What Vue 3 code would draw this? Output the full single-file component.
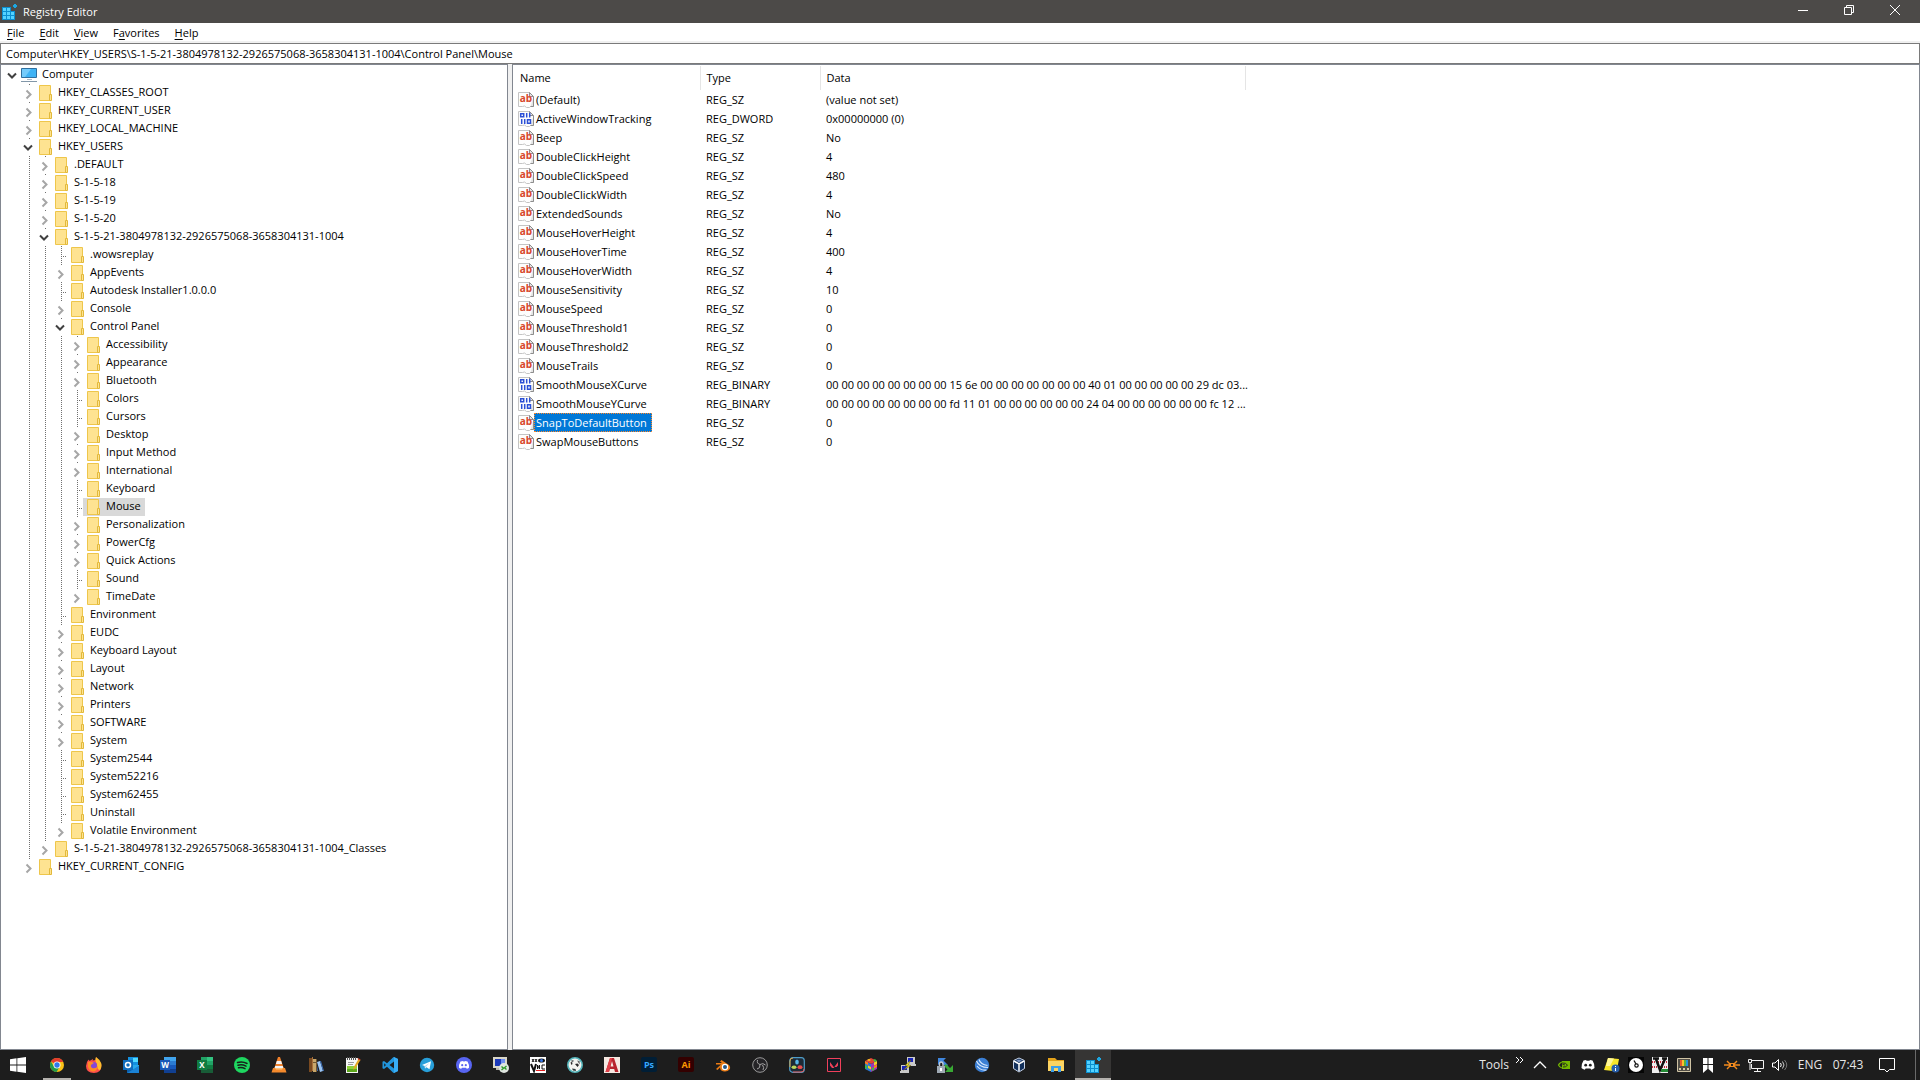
<script setup>
import { ref } from 'vue'

const menus = ['File', 'Edit', 'View', 'Favorites', 'Help'].map((label) => {
  const at = label === 'Favorites' ? 1 : 0
  return { label, before: label.slice(0, at), key: label[at], after: label.slice(at + 1) }
})

const address = ref('Computer\\HKEY_USERS\\S-1-5-21-3804978132-2926575068-3658304131-1004\\Control Panel\\Mouse')

// state: '+' collapsed, '-' expanded, '' leaf
const tree = [
  [0, '-', 'Computer'],
  [1, '+', 'HKEY_CLASSES_ROOT'],
  [1, '+', 'HKEY_CURRENT_USER'],
  [1, '+', 'HKEY_LOCAL_MACHINE'],
  [1, '-', 'HKEY_USERS'],
  [2, '+', '.DEFAULT'],
  [2, '+', 'S-1-5-18'],
  [2, '+', 'S-1-5-19'],
  [2, '+', 'S-1-5-20'],
  [2, '-', 'S-1-5-21-3804978132-2926575068-3658304131-1004'],
  [3, '', '.wowsreplay'],
  [3, '+', 'AppEvents'],
  [3, '', 'Autodesk Installer1.0.0.0'],
  [3, '+', 'Console'],
  [3, '-', 'Control Panel'],
  [4, '+', 'Accessibility'],
  [4, '+', 'Appearance'],
  [4, '+', 'Bluetooth'],
  [4, '', 'Colors'],
  [4, '', 'Cursors'],
  [4, '+', 'Desktop'],
  [4, '+', 'Input Method'],
  [4, '+', 'International'],
  [4, '', 'Keyboard'],
  [4, '', 'Mouse'],
  [4, '+', 'Personalization'],
  [4, '+', 'PowerCfg'],
  [4, '+', 'Quick Actions'],
  [4, '', 'Sound'],
  [4, '+', 'TimeDate'],
  [3, '', 'Environment'],
  [3, '+', 'EUDC'],
  [3, '+', 'Keyboard Layout'],
  [3, '+', 'Layout'],
  [3, '+', 'Network'],
  [3, '+', 'Printers'],
  [3, '+', 'SOFTWARE'],
  [3, '+', 'System'],
  [3, '', 'System2544'],
  [3, '', 'System52216'],
  [3, '', 'System62455'],
  [3, '', 'Uninstall'],
  [3, '+', 'Volatile Environment'],
  [2, '+', 'S-1-5-21-3804978132-2926575068-3658304131-1004_Classes'],
  [1, '+', 'HKEY_CURRENT_CONFIG'],
].map(([level, state, label]) => ({ level, state, label }))

const selectedKey = ref('Mouse')

const values = [
  ['(Default)', 'REG_SZ', '(value not set)'],
  ['ActiveWindowTracking', 'REG_DWORD', '0x00000000 (0)'],
  ['Beep', 'REG_SZ', 'No'],
  ['DoubleClickHeight', 'REG_SZ', '4'],
  ['DoubleClickSpeed', 'REG_SZ', '480'],
  ['DoubleClickWidth', 'REG_SZ', '4'],
  ['ExtendedSounds', 'REG_SZ', 'No'],
  ['MouseHoverHeight', 'REG_SZ', '4'],
  ['MouseHoverTime', 'REG_SZ', '400'],
  ['MouseHoverWidth', 'REG_SZ', '4'],
  ['MouseSensitivity', 'REG_SZ', '10'],
  ['MouseSpeed', 'REG_SZ', '0'],
  ['MouseThreshold1', 'REG_SZ', '0'],
  ['MouseThreshold2', 'REG_SZ', '0'],
  ['MouseTrails', 'REG_SZ', '0'],
  ['SmoothMouseXCurve', 'REG_BINARY', '00 00 00 00 00 00 00 00 15 6e 00 00 00 00 00 00 00 40 01 00 00 00 00 00 29 dc 03...'],
  ['SmoothMouseYCurve', 'REG_BINARY', '00 00 00 00 00 00 00 00 fd 11 01 00 00 00 00 00 00 24 04 00 00 00 00 00 00 fc 12 ...'],
  ['SnapToDefaultButton', 'REG_SZ', '0'],
  ['SwapMouseButtons', 'REG_SZ', '0'],
].map(([name, type, data]) => ({ name, type, data }))

const selectedValue = ref('SnapToDefaultButton')

const regedit = `<path fill="#0b8fd0" d="M1 3h9v4h4v9H1z"/><path fill="#54d2ff" d="M2 4h3v3H2zM6 4h3v3H6zM2 8h3v3H2zM6 8h3v3H6zM10 8h3v3h-3zM2 12h3v3H2zM6 12h3v3H6zM10 12h3v3h-3z"/><path fill="#1da6e0" d="M12 1h1V0h2v1h1v2h-1v1h-2V3h-1z"/>`

const apps = [
  { name: 'Google Chrome', open: true, svg: `<circle cx="8" cy="8" r="7" fill="#fbc116"/><path fill="#e33b2e" d="M8 8 1.9 4.5A7 7 0 0 1 14.2 5H8z"/><path fill="#229a4a" d="M1.9 4.5A7 7 0 0 0 7.6 15L10.8 9.5 8 8 4.9 9.5z"/><circle cx="8" cy="8" r="3.5" fill="#fff"/><circle cx="8" cy="8" r="2.7" fill="#2f78ea"/>` },
  { name: 'Firefox', svg: `<path fill="#ff4f4b" d="M1 5 2.5 2.5l.7 1.3L5 3.2 7 1.8l-.4 1.8L9.5 3 10 0l2.5 3L15 6.500q1.600 9.500-7 9.500Q0 16 0 9z"/><path fill="#ffbd2e" d="M10 0q4 2.500 5.300 6.500.8 4-1.300 6.500-3 0-3-6Q8.500 4 10 0z"/><circle cx="7.500" cy="8.500" r="3.500" fill="#8548d9"/><path fill="#ff8b24" d="M2 5q3-1 6 1L5.500 7.500Q4 9 6 11q4 1 6-2-1 6-6 5.500Q1 13 2 5z"/>` },
  { name: 'Outlook', svg: `<path fill="#1490df" d="M5 0h10v8H5z"/><path fill="#50d9ff" d="M10 1h5v4h-5z"/><path fill="#28a8ea" d="M4 8h12v8H4z"/><path fill="#0a5fac" d="m4 9 6 4 6-4v7H4z"/><path fill="#1a82d5" d="m4 16 12-7v7z"/><rect y="3" width="10" height="10" fill="#0f6cbd"/><circle cx="5" cy="8" r="2.500" fill="none" stroke="#fff" stroke-width="1.500"/>` },
  { name: 'Word', svg: `<path fill="#41a5ee" d="M4 0h12v4H4z"/><path fill="#2b7cd3" d="M4 4h12v4H4z"/><path fill="#185abd" d="M4 8h12v4H4z"/><path fill="#103f91" d="M4 12h12v4H4z"/><path fill="#1957b7" d="M0 3h10v10H0z"/><text x="5" y="11" class="glyph" font-size="8" fill="#fff">W</text>` },
  { name: 'Excel', svg: `<path fill="#21a366" d="M4 0h6v8H4z"/><path fill="#33c481" d="M10 0h6v4h-6z"/><path fill="#21a366" d="M10 4h6v4h-6z"/><path fill="#107c41" d="M10 8h6v4h-6z"/><path fill="#185c37" d="M4 8h6v4h6v4H4z"/><path fill="#107c41" d="M0 3h10v10H0z"/><text x="5" y="11" class="glyph" font-size="8" fill="#fff">X</text>` },
  { name: 'Spotify', svg: `<circle cx="8" cy="8" r="8" fill="#1ed760"/><path fill="none" stroke="#17201a" stroke-linecap="round" stroke-width="1.500" d="M3.500 5.500q5-1.500 9.500 1M4 8.200q4-1.200 8 .9M4.500 10.800q3.500-.9 6.500.8"/>` },
  { name: 'VLC', svg: `<path fill="#f0802a" d="M8 0h1l4 12H3L7 0z"/><path fill="#f3f3f3" d="M5.800 4h4.400l.9 3H4.900zM4.200 9h7.600l.7 2.500h-9z"/><path fill="#f58a2c" d="M2 11h12l1.500 4.500H.5z"/><path fill="#ffc27a" d="M4 11h8l-1 1.500H5z"/>` },
  { name: 'Calibre', svg: `<path fill="#7a4a20" d="M1 1h3v14H1z"/><path fill="#a8703a" d="M4 0h1v14H4z"/><path fill="#c9a86b" d="M5 2h3v13H5z"/><path fill="#6f5632" d="M8 2h1v13H8zM5 5h3v1H5z"/><path fill="#9cc5f2" d="m9 5 3-1 3 10-3 1z"/><path fill="#3d6fb8" d="m12 4 1 0 3 10-1 0zM9 8l1 6H9z"/>` },
  { name: 'Notepad++', svg: `<path fill="#f6f6f6" d="M1 1h12v15H1z"/><path fill="#555" d="M2 0h1v3H2zM4 0h1v3H4zM6 0h1v3H6zM8 0h1v3H8zM10 0h1v3h-1z"/><path fill="#9a9a9a" d="M3 5h6v1H3zM3 7h5v1H3z"/><path fill="#8ed03a" d="M2 9h10v6H2z"/><path fill="#5ea81c" d="M2 12h10v3H2z"/><path fill="#e5a823" d="m13.500 2 2 1-5 8-2 2 .3-3z"/><path fill="#d33c27" d="m13 1 2.500 1.500-.5 1L12.500 2z"/>` },
  { name: 'Visual Studio Code', svg: `<path fill="#2196dd" d="M11.500 0 5 6.200 2 4 .5 4.800v6.400L2 12l3-2.200 6.500 6.200L16 14V2zM2.200 9.800V6.200L4 8zM12 11.500 7.500 8 12 4.500z"/><path fill="#38adf5" d="M12 0l4 2v12l-4 2z"/>` },
  { name: 'Telegram', svg: `<circle cx="8" cy="8" r="7.200" fill="#289fd9"/><path fill="#fff" d="m3 8 9-3.700-1.500 8-3-2.100L6 11.500 5.700 9z"/><path fill="#b8dcf0" d="m5.700 9 4.600-3-3.200 3.800L6 11.500z"/>` },
  { name: 'Discord', svg: `<circle cx="8" cy="8" r="8" fill="#5865f2"/><path fill="#fff" d="M4.500 4.500 7 4l.4.600h1.200L9 4l2.500.5q1.800 3 1.500 6.200-1 .9-2.300 1.100l-.6-1H5.900l-.6 1Q4 11.600 3 10.700q-.3-3.200 1.500-6.200z"/><circle cx="6.200" cy="8.200" r="1.100" fill="#5865f2"/><circle cx="9.800" cy="8.200" r="1.100" fill="#5865f2"/>` },
  { name: 'Remote Desktop Manager', svg: `<path fill="#d9d6c8" d="M0 0h14v11H0z"/><path fill="#1c39b8" d="M2 2h6v7H2z"/><path fill="#6e8ef0" d="M8 2h4v7H8z"/><path fill="#bcb9ab" d="M3 11h5v2H3z"/><circle cx="11" cy="11" r="5" fill="#dfe5df"/><path fill="none" stroke="#2f9b2c" stroke-width="1.400" d="m8.500 9.500 2 1.800-2 1.700m5-4-2 1.700 2 1.800"/>` },
  { name: 'VNC Server', svg: `<path fill="#fff" d="M0 0h16v16H0z"/><path fill="none" stroke="#111" stroke-width="1" d="M2 2l2 3m0-3L2 5m3-3 2 3m0-3L5 5"/><ellipse cx="11.500" cy="3.500" rx="3.500" ry="2" fill="#111"/><circle cx="11.500" cy="3.500" r="1.500" fill="#3878e8"/><path fill="none" stroke="#111" stroke-width="2" d="m1 7 3 7 2-7"/><path fill="none" stroke="#111" d="M7.500 12V8l2 4V8m5.500 0h-3v4h3"/><path fill="#e02020" d="M6 13h9v1H6z"/>` },
  { name: 'Seal Browser', svg: `<circle cx="8" cy="8" r="7.200" fill="#f4f4f0" stroke="#55b5bb" stroke-width="1.600"/><path fill="#6a6f6f" d="M4 3.500 6 3l1 1-2 1.500zM10 3.500l2.500.5.5 1.500-2-.5z"/><path fill="#282828" d="m3.500 5.500 1.500-.5.500 2-1 1zM8 7l2.500-.5 1.500 1.500-1.500 2zM11 4.500l1.500 1v2z"/><path fill="#2d3b3c" d="M5 11.500 8.500 12l.5 2-3-.5z"/>` },
  { name: 'AutoCAD', svg: `<path fill="#f6e9e2" d="M0 0h16v16H0z"/><path fill="#b8232c" fill-rule="evenodd" d="M6 1h4l4.500 14H11l-.8-3H5.800L5 15H1.500zm2 3-1.500 5.500h3z"/><path fill="#e0414a" d="M6 1h2L5 15H1.500z"/>` },
  { name: 'Photoshop', svg: `<rect width="16" height="15" rx="2" fill="#001e36"/><text x="8" y="11" class="glyph" font-size="9" fill="#35a8ff">Ps</text>` },
  { name: 'Illustrator', svg: `<rect width="16" height="15" rx="2" fill="#330000"/><text x="8" y="11" class="glyph" font-size="9" fill="#ff9a00">Ai</text>` },
  { name: 'Blender', svg: `<path fill="#ea7b14" d="M1 6h6L5 4.500 6.500 3 14 8q2 2.500.5 4.500-2 2.500-5.500 2-4-.7-4-4L2.500 13 1 12l5-4.500H1z"/><circle cx="10" cy="10" r="3.200" fill="#fff"/><circle cx="10" cy="10" r="2" fill="#265787"/>` },
  { name: 'OBS Studio', svg: `<circle cx="8" cy="8" r="7.300" fill="#252427" stroke="#9a9a9a"/><path fill="none" stroke="#a5a5a5" d="M8 7.500Q4.500 6.500 5.500 3M8 7.500q3-2 5.500.5M8 7.500q.5 4-3 4.500M11 13q1.500-2.500-.5-5"/>` },
  { name: 'DaVinci Resolve', svg: `<rect x=".7" y=".7" width="14.600" height="14.600" rx="3" fill="#1d2a36" stroke="#4f9dc9" stroke-width="1.200"/><path fill="none" stroke="#e0a53a" d="M1 10V4q0-3 3-3"/><path fill="none" stroke="#e05656" d="M4 15h8q3 0 3-3"/><ellipse cx="8" cy="5" rx="1.800" ry="2.500" fill="#57b7e8"/><ellipse cx="5" cy="10.200" rx="2.500" ry="1.800" fill="#b9d65a"/><ellipse cx="11" cy="10.200" rx="2.500" ry="1.900" fill="#ea4d4d"/>` },
  { name: 'Valorant', svg: `<path fill="#111b26" stroke="#f0405a" d="M1.500 1.500h13v13h-13z"/><path fill="#f0405a" d="m4 5 4.500 6H6L4 8.500zm8 0v3.500L10.600 10H8.300z"/>` },
  { name: 'Color Cube', svg: `<path fill="#e34234" d="m8 1 6 3-6 3-6-3z"/><path fill="#2c78d4" d="m2 4 6 3v8l-6-3z"/><path fill="#9c35b8" d="m14 4-6 3v8l6-3z"/><path fill="#f7d21e" d="m4 3 2-1 2 1-2 1zM5 8.500 8 10v2.500L5 11zM11 5.500 14 4v3l-3 1.500z"/><path fill="#3cc13c" d="m10 3 2-1 2 2-2 1zM2 8l2 1v3l-2-1zm7 3 2-1v3l-2 1z"/><path fill="#ff7d1a" d="m2 4 3 1.500v2.500L2 6.500zM11 9l3-1.500V10l-3 1.500z"/>` },
  { name: 'PuTTY', svg: `<path fill="#c9c9c9" d="M7 0h8v7H7zM1 8h8v6H1zM0 14h9v2H0zM7 7h9v2H7z"/><path fill="#1824b8" d="M8 1h5v4H8zM2 9h5v4H2z"/><path fill="#fff22a" stroke="#5c5710" stroke-width=".5" d="M11 3 5 8.500l3 .3L3.500 13 11 8.500 8 8z"/>` },
  { name: 'WinSCP', svg: `<path fill="#3f86dd" d="M1 1h8L6.500 3.500 11 8 9 10 4 5.500 1 8z"/><path fill="#38a834" d="M16 15H8l2.500-2.500L7 9l2-2 4 4 3-3z"/><path fill="none" stroke="#c3c9cf" stroke-width="1.400" d="M2.500 9V7q0-2 1.700-2T6 7v2"/><path fill="#9fa9b3" d="M0 9h8v7H0z"/><path fill="#fff" d="M3 11h2v3H3z"/>` },
  { name: 'Wave Client', svg: `<circle cx="8" cy="8" r="7.200" fill="#3b7fd4"/><path fill="none" stroke="#d6e8ff" stroke-width="1.100" d="M2.500 4q2.500 6.500 11.500 6.500M5 2.500q1.500 5 8.500 6M3 9q4 5 9.500 4"/>` },
  { name: 'VirtualBox', svg: `<path fill="#12305c" stroke="#c6d3e8" d="m8 1 5.500 2.500v8L8 15l-5.500-3.500v-8z"/><path fill="none" stroke="#fff" stroke-width="1.500" d="m3 4 5 3 5-3M8 7v7"/><path fill="#7d97c3" d="m8 2.500 3 1.300-3 1.500-3-1.500z"/>` },
  { name: 'File Explorer', svg: `<path fill="#e3a21a" d="M0 1h7l2 2h7v4H0z"/><path fill="#fcd462" d="M0 4h16v10H0z"/><path fill="#3d9fe8" d="M3 15V9h10v6h-3v-3H6v3z"/><path fill="#fcd462" d="M6 11h4v3H6z"/>` },
  { name: 'Registry Editor', open: true, active: true, svg: regedit },
]

const tray = [
  { name: 'Show hidden icons', svg: `<path fill="none" stroke="#fff" stroke-width="1.300" d="m2 11 6-6 6 6"/>` },
  { name: 'NVIDIA Settings', svg: `<path fill="#76b900" d="M6 4h8v8H6z"/><path fill="none" stroke="#76b900" stroke-width="1.200" d="M8 4.500Q4 5 2.500 8 4.500 11.500 9 11.500"/><path fill="none" stroke="#202020" stroke-width=".9" d="M6 6q4-.5 5.500 2.200Q9.500 10.500 7 10M6.500 7.700q2-.6 2.500.6"/>` },
  { name: 'Discord', svg: `<path fill="#fff" d="M3.500 3.500 6 3l.6.800h2.800L10 3l2.500.5q2.300 3.500 2 7.500-1.200 1.300-3.300 1.700l-.8-1.200H5.600l-.8 1.200Q2.700 12.300 1.500 11q-.3-4 2-7.500z"/><circle cx="5.700" cy="8.200" r="1.400" fill="#202020"/><circle cx="10.300" cy="8.200" r="1.400" fill="#202020"/>` },
  { name: 'Notes', svg: `<path fill="#f8e62a" d="m4 1 11 1-2 11-4 1-9-1z"/><path fill="#fff79a" d="m4 1 6 .5L6 9H2z"/><circle cx="11.500" cy="11.500" r="4" fill="#285ea8"/><path fill="#fff" d="M11 9h1v1h-1zm0 2h1v3h-1z"/>` },
  { name: 'Time Sync', svg: `<path fill="#050505" d="M0 0h16v16H0z"/><circle cx="8" cy="8" r="7" fill="#fff"/><path fill="none" stroke="#111" stroke-width="1.300" d="M6 3.500 8 7"/><circle cx="8.500" cy="8.500" r="1.700" fill="none" stroke="#111" stroke-width="1.200"/>` },
  { name: 'VNC', svg: `<path fill="#eee" d="M0 0h16v16H0z"/><path fill="none" stroke="#cc2c3c" stroke-dasharray="1 1" stroke-width="2" d="M0 5h16M0 10h16"/><path fill="none" stroke="#111" stroke-width="2.500" d="m4 2 4 11 5-11M1 1.500h6m3 0h5"/><path fill="#248b35" d="M9 12h7v3H9z"/>` },
  { name: 'PowerToys', svg: `<path fill="#504c44" stroke="#cfc3a4" d="M1.500 1.500h13v13h-13z"/><path fill="#e65c2e" d="M4 3h2v6H4z"/><path fill="#fbc02d" d="M6 3h2v6H6z"/><path fill="#59b33e" d="M8 3h2v6H8z"/><path fill="#2591df" d="M10 3h2v6h-2z"/><path fill="#d8cba9" d="M3 11h2v2H3zM7 11h2v2H7zM11 11h2v2h-2z"/>` },
  { name: 'Bookmarks', svg: `<path fill="#fff" d="M3 1h4.500v6H3zM8.500 1H13v6H8.500zM3 8h4.500v4L3 16zM8.500 8H13v8l-4.500-4z"/>` },
  { name: 'Razer', svg: `<path fill="none" stroke="#f28a1e" stroke-width="1.400" d="M0 8h5m6 0h5M3 4l3 3h4l3-3M3 12l3-3h4l3 3"/><path fill="#f28a1e" d="M5 6h6v4H5z"/><path fill="#222" d="M7 7h2v2H7z"/>` },
  { name: 'Network', svg: `<path fill="none" stroke="#f2f2f2" d="M4 3.500h11.500v8H3.500V7M.5 2.500h3v3h-3zM2 6v7m4 1.500h7M9.500 12v2"/>` },
  { name: 'Volume', svg: `<path fill="none" stroke="#fff" d="M.5 6v4H3l3.500 3.500v-11L3 6zM8.500 6q1.500 2 0 4"/><path fill="none" stroke="#ccc" d="M10.500 4.500q3 3.500 0 7"/><path fill="none" stroke="#777" d="M12.500 3q4.500 5 0 10"/>` },
]
</script>

<template>
  <div class="desktop">
    <header class="titlebar">
      <svg class="icon" viewBox="0 0 16 16" aria-hidden="true" v-html="regedit"></svg>
      <h1>Registry Editor</h1>
      <div class="window-buttons">
        <button type="button" aria-label="Minimize">
          <svg width="10" height="10" viewBox="0 0 10 10"><path d="M0 5.500h10" /></svg>
        </button>
        <button type="button" aria-label="Restore">
          <svg width="10" height="10" viewBox="0 0 10 10"><path d="M.5 2.500h7v7h-7zM2.500 2.500v-2h7v7h-2" /></svg>
        </button>
        <button type="button" aria-label="Close">
          <svg width="10" height="10" viewBox="0 0 10 10"><path d="m0 0 10 10M10 0 0 10" /></svg>
        </button>
      </div>
    </header>

    <nav class="menubar" aria-label="Menu">
      <button v-for="m in menus" :key="m.label" type="button">{{ m.before }}<u>{{ m.key }}</u>{{ m.after }}</button>
    </nav>

    <input v-model="address" class="address" type="text" aria-label="Registry path" spellcheck="false" />

    <main class="panes">
      <ul class="tree" role="tree" aria-label="Registry keys">
        <li
          v-for="node in tree"
          :key="node.label"
          role="treeitem"
          :aria-level="node.level + 1"
          :aria-selected="node.label === selectedKey"
        >
          <span v-for="n in node.level" :key="n" class="cell" :class="{ line: n > 1 }"></span>
          <button v-if="node.state" type="button" class="cell toggle" :class="{ dot: node.level > 0 }" :aria-label="'Toggle ' + node.label">
            <svg v-if="node.state === '+'" width="16" height="18" viewBox="0 0 16 18"><path stroke="#a6a6a6" d="m7.500 6.500 4 4-4 4" /></svg>
            <svg v-else width="16" height="18" viewBox="0 0 16 18"><path stroke="#404040" d="m5 7.500 4 4 4-4" /></svg>
          </button>
          <span v-else class="cell line leaf"></span>
          <button type="button" class="key" :class="{ selected: node.label === selectedKey }" @click="selectedKey = node.label">
            <svg v-if="node.level" class="icon" viewBox="0 0 16 16" aria-hidden="true">
              <path fill="#fee391" stroke="#eec64b" d="M2.500.5h11v15h-11z" />
              <path fill="#fee391" stroke="#e2b93b" d="M12.500 9.500h2v6h-2z" />
            </svg>
            <svg v-else class="icon" viewBox="0 0 16 16" aria-hidden="true">
              <path fill="#3fb3f5" stroke="#2f6f9f" d="M.5 1.500h15v9H.5z" />
              <path fill="#74cbfb" d="M1 2h9l-6 8H1z" />
              <path fill="#a9bac8" d="M6 12h5v1H6z" />
              <path fill="#8297a9" d="M0 14h16v1H0z" />
            </svg>
            <span>{{ node.label }}</span>
          </button>
        </li>
      </ul>

      <section class="values" aria-label="Values">
        <table>
          <colgroup>
            <col class="col-name" />
            <col class="col-type" />
            <col class="col-data" />
            <col />
          </colgroup>
          <thead>
            <tr>
              <th scope="col">Name</th>
              <th scope="col">Type</th>
              <th scope="col">Data</th>
              <td></td>
            </tr>
          </thead>
          <tbody>
            <tr v-for="v in values" :key="v.name" @click="selectedValue = v.name">
              <td>
                <div class="name">
                  <svg class="icon" viewBox="0 0 16 16" aria-hidden="true">
                    <path fill="#fdfdfd" stroke="#c4c4c4" d="M.5.5h11l4 4v10h-3l-1 1h-3l-2-1.500-2 .5h-4z" />
                    <path fill="#e4e4e4" stroke="#8d8d8d" d="M11.500.5v4h4zM15.500 5v9.500h-3" />
                    <text v-if="v.type === 'REG_SZ'" x="8" y="10" class="glyph" font-size="10" fill="#d8472b">ab</text>
                    <path
                      v-else
                      fill="none"
                      stroke="#2a4fd6"
                      stroke-width="1.500"
                      d="M2.700 2.700h3v3h-3zM8.700 2v4.500M11.700 2v4.500M3.700 8v5M6.700 8v5M9.500 8.700h3v3.500h-3z"
                    />
                  </svg>
                  <span :class="{ selected: v.name === selectedValue }">{{ v.name }}</span>
                </div>
              </td>
              <td>{{ v.type }}</td>
              <td>{{ v.data }}</td>
              <td></td>
            </tr>
          </tbody>
        </table>
      </section>
    </main>

    <footer class="taskbar">
      <button type="button" class="task start" aria-label="Start">
        <svg class="icon" viewBox="0 0 16 16"><path fill="#fff" d="M0 2.200 6.500 1.300v6.200H0zM7.300 1.200 16 0v7.500H7.300zM0 8.400h6.500v6.300L0 13.800zM7.300 8.400H16V16l-8.700-1.200z" /></svg>
      </button>
      <div class="apps">
        <button
          v-for="app in apps"
          :key="app.name"
          type="button"
          class="task"
          :class="{ open: app.open, active: app.active }"
          :aria-label="app.name"
        >
          <svg class="icon" viewBox="0 0 16 16" v-html="app.svg"></svg>
        </button>
      </div>
      <div class="tray">
        <button type="button" class="tools">Tools</button>
        <button type="button" class="more" aria-label="More tools">
          <svg width="10" height="8" viewBox="0 0 10 8"><path d="m1 1 3 3-3 3M5 1l3 3-3 3" /></svg>
        </button>
        <button v-for="t in tray" :key="t.name" type="button" class="tray-icon" :aria-label="t.name">
          <svg class="icon" viewBox="0 0 16 16" v-html="t.svg"></svg>
        </button>
        <button type="button" class="lang">ENG</button>
        <button type="button" class="clock">07:43</button>
        <button type="button" class="notify" aria-label="Notifications">
          <svg width="16" height="16" viewBox="0 0 16 16"><path d="M.5 1.500h15v11h-5L8 15l-2.500-2.500h-5z" /></svg>
        </button>
        <button type="button" class="peek" aria-label="Show desktop"></button>
      </div>
    </footer>
  </div>
</template>

<style>
body {
  background: #f0f0f0;
}

.glyph {
  font-family: "Open Sans", sans-serif;
  font-weight: 700;
  text-anchor: middle;
}
</style>

<style scoped>
.desktop {
  display: flex;
  flex-direction: column;
  min-height: 100vh;
  font: 11px/18px "Open Sans", "Noto Sans", sans-serif;
  color: #000;
}

.desktop * {
  box-sizing: border-box;
}

button {
  margin: 0;
  padding: 0;
  border: 0;
  background: none;
  color: inherit;
  font: inherit;
}

.icon {
  flex: none;
  display: block;
  width: 16px;
  height: 16px;
}

.titlebar {
  display: flex;
  align-items: center;
  height: 23px;
  padding-left: 1px;
  background: #4c4a48;
  color: #fff;
}

.titlebar h1 {
  margin: 0 0 0 6px;
  font-size: 11px;
  font-weight: 400;
}

.window-buttons {
  display: flex;
  margin-left: auto;
  padding-right: 2px;
}

.window-buttons button {
  display: flex;
  align-items: flex-start;
  justify-content: center;
  width: 46px;
  height: 23px;
  padding-top: 5px;
}

.window-buttons path {
  fill: none;
  stroke: #fff;
}

.menubar {
  display: flex;
  height: 20px;
  gap: 15px;
  padding-left: 7px;
  border-bottom: 2px solid #f0f0f0;
  background: #fff;
  line-height: 20px;
}

.menubar u {
  text-underline-offset: 2px;
}

.address {
  width: 100%;
  height: 21px;
  padding: 0 5px;
  border: 1px solid #7a7a7a;
  border-radius: 0;
  background: #fff;
  color: #000;
  font: inherit;
  outline: 0;
}

.panes {
  flex: 1;
  display: flex;
  gap: 4px;
}

.tree,
.values {
  margin: 0;
  border: 1px solid #828790;
  background: #fff;
}

.tree {
  flex: none;
  width: 508px;
  padding: 1px 2px;
  list-style: none;
}

.tree li {
  display: flex;
  height: 18px;
}

.cell {
  flex: none;
  width: 16px;
  height: 18px;
}

.line {
  background: repeating-linear-gradient(#707070 0 1px, transparent 1px 2px) 10px 0 / 1px 18px no-repeat;
}

.leaf {
  background:
    repeating-linear-gradient(#707070 0 1px, transparent 1px 2px) 10px 0 / 1px 18px no-repeat,
    repeating-linear-gradient(90deg, #707070 0 1px, transparent 1px 2px) 10px 10px / 6px 1px no-repeat;
}

.dot {
  background: linear-gradient(#707070, #707070) 10px 0 / 1px 1px no-repeat;
}

.toggle svg {
  display: block;
}

.toggle path {
  fill: none;
  stroke-width: 2;
}

.key {
  display: flex;
  align-items: center;
  gap: 5px;
  height: 18px;
  padding: 0 4px 0 2px;
  white-space: nowrap;
}

.key span {
  height: 18px;
  line-height: 16px;
}

.key.selected {
  background: #d9d9d9;
}

.values {
  flex: 1;
  min-width: 0;
  padding-top: 1px;
}

table {
  width: 100%;
  border-collapse: collapse;
  table-layout: fixed;
}

.col-name {
  width: 187px;
}

.col-type {
  width: 120px;
}

.col-data {
  width: 425px;
}

th,
td {
  padding: 0 0 0 6px;
  font-weight: 400;
  text-align: left;
  white-space: nowrap;
}

th {
  height: 24px;
  padding-left: 7px;
  border-right: 1px solid #e5e5e5;
}

th + th {
  padding-left: 6px;
}

tbody td {
  height: 19px;
}

tbody td:first-child {
  padding-left: 5px;
}

.name {
  display: flex;
  align-items: center;
  height: 19px;
}

.name span {
  height: 19px;
  padding: 0 5px 0 2px;
  line-height: 20px;
}

.name .selected {
  background: #0078d7;
  color: #fff;
  outline: 1px dotted #ff8728;
  outline-offset: -1px;
}

.taskbar {
  display: flex;
  height: 30px;
  background: #1d1d1d;
  color: #e6e6e6;
}

.apps {
  display: flex;
  gap: 1px;
}

.task {
  display: flex;
  align-items: center;
  justify-content: center;
  width: 36px;
  height: 30px;
}

.start {
  margin-right: 3px;
}

.open {
  background: linear-gradient(#b5b2ae, #b5b2ae) center bottom / 28px 2px no-repeat;
}

.active {
  background: linear-gradient(#b5b2ae, #b5b2ae) center bottom / 36px 2px no-repeat #363534;
}

.tray {
  display: flex;
  align-items: center;
  margin-left: auto;
}

.more {
  height: 18px;
  margin: 0 3px 0 6px;
}

.more svg {
  display: block;
  margin-bottom: 10px;
}

.more path,
.notify path {
  fill: none;
  stroke: #fff;
}

.tray-icon {
  display: flex;
  justify-content: center;
  width: 24px;
}

.tools,
.lang,
.clock {
  font-size: 12px;
}

.lang {
  width: 36px;
}

.clock {
  width: 40px;
}

.notify {
  width: 28px;
  margin: 0 14px 0 5px;
}

.notify svg {
  display: block;
  margin: 0 auto;
}

.peek {
  width: 5px;
  height: 30px;
  border-left: 1px solid #6a6a6a;
}
</style>
